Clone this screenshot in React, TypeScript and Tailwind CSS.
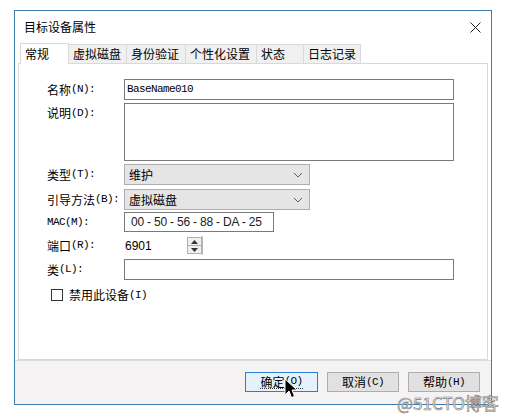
import React from "react";

const CJK = "font-['Microsoft_YaHei','Noto_Sans_CJK_SC',sans-serif]";
const MONO = "font-['Liberation_Mono','Noto_Sans_CJK_SC',monospace]";

type LabelProps = { zh?: string; en: string };

function Label({ zh, en }: LabelProps) {
  return (
    <span className="flex items-center text-black">
      {zh && <span className={`${CJK} text-[12px] leading-none`}>{zh}</span>}
      <span className={`${MONO} text-[11px] leading-none tracking-[-0.6px]`}>{en}</span>
    </span>
  );
}

const TABS = [
  { name: "常规", w: "w-[49px]", active: true },
  { name: "虚拟磁盘", w: "w-[58px]" },
  { name: "身份验证", w: "w-[59px]" },
  { name: "个性化设置", w: "w-[71px]" },
  { name: "状态", w: "w-[47px]" },
  { name: "日志记录", w: "w-[57px]" },
];

function Chevron() {
  return (
    <svg width="10" height="6" viewBox="0 0 10 6" className="text-[#606060]">
      <path d="M1 1 L5 5 L9 1" fill="none" stroke="currentColor" strokeWidth="1" />
    </svg>
  );
}

function Select({ value }: { value: string }) {
  return (
    <div className="flex h-[21px] w-[186px] items-center justify-between border border-[#adadad] bg-[#e5e5e5] pl-[4px] pr-[6px]">
      <span className={`${CJK} text-[12px] leading-none text-black`}>{value}</span>
      <Chevron />
    </div>
  );
}

function Cursor() {
  return (
    <svg width="14" height="21" viewBox="0 0 14 21" className="absolute left-[284px] top-[378px]">
      <path
        d="M1 1 L1 17 L5 13 L7.5 19.5 L10.5 18.3 L8 12 L13 12 Z"
        fill="#000"
        stroke="#fff"
        strokeWidth="1"
        strokeLinejoin="round"
      />
    </svg>
  );
}

export default function App() {
  return (
    <div className="relative h-[418px] w-[505px] overflow-hidden bg-white">
      <div className="ml-[14px] mt-[10px] flex h-[395px] w-[478px] flex-col border border-[#3a7fb0] bg-white">
        {/* title bar */}
        <div className="flex h-[32px] shrink-0 items-center justify-between pl-[9px] pr-[10px]">
          <span className={`${CJK} text-[12px] text-black`}>目标设备属性</span>
          <svg width="11" height="11" viewBox="0 0 11 11">
            <path d="M0.5 0.5 L10.5 10.5 M10.5 0.5 L0.5 10.5" stroke="#222" strokeWidth="1" />
          </svg>
        </div>

        {/* tabs */}
        <div className="flex h-[20px] shrink-0 items-end pl-[5px]">
          {TABS.map((t) =>
            t.active ? (
              <div
                key={t.name}
                className={`${t.w} relative z-10 -mb-px flex h-[21px] items-center border border-b-0 border-[#d9d9d9] bg-white pl-[4px]`}
              >
                <span className={`${CJK} text-[12px] leading-none text-black`}>{t.name}</span>
              </div>
            ) : (
              <div
                key={t.name}
                className={`${t.w} flex h-[19px] items-center border border-l-0 border-b-0 border-[#d9d9d9] bg-[#f0f0f0] pl-[4px]`}
              >
                <span className={`${CJK} text-[12px] leading-none text-black`}>{t.name}</span>
              </div>
            )
          )}
        </div>

        {/* panel */}
        <div className="mx-[3px] flex h-[297px] shrink-0 flex-col border border-[#d9d9d9] bg-white pl-[28px] pt-[15px]">
          <div className="flex h-[21px] items-center">
            <div className="w-[77px]">
              <Label zh="名称" en="(N):" />
            </div>
            <div className="flex h-[21px] w-[330px] items-center border border-[#7a7a7a] pl-[2px]">
              <span className={`${MONO} text-[11px] leading-none tracking-[-0.6px] text-black`}>BaseName010</span>
            </div>
          </div>

          <div className="mt-[3px] flex h-[58px]">
            <div className="w-[77px] pt-[4px]">
              <Label zh="说明" en="(D):" />
            </div>
            <div className="h-[58px] w-[330px] border border-[#7a7a7a]" />
          </div>

          <div className="mt-[3px] flex h-[21px] items-center">
            <div className="w-[77px]">
              <Label zh="类型" en="(T):" />
            </div>
            <Select value="维护" />
          </div>

          <div className="mt-[4px] flex h-[21px] items-center">
            <div className="w-[77px]">
              <Label zh="引导方法" en="(B):" />
            </div>
            <Select value="虚拟磁盘" />
          </div>

          <div className="mt-[2px] flex h-[20px] items-center">
            <div className="w-[77px]">
              <Label en="MAC(M):" />
            </div>
            <div className="flex h-[20px] w-[150px] items-center border border-[#7a7a7a] pl-[6px]">
              <span className="font-['Liberation_Sans',sans-serif] text-[12px] leading-none tracking-[-0.2px] text-[#222]">
                00 - 50 - 56 - 88 - DA - 25
              </span>
            </div>
          </div>

          <div className="mt-[4px] flex h-[19px] items-center">
            <div className="w-[77px]">
              <Label zh="端口" en="(R):" />
            </div>
            <div className="flex h-[19px] w-[79px] items-center justify-between border-r border-[#b9b9b9]">
              <span className="font-['Liberation_Sans',sans-serif] pl-[1px] text-[12px] leading-none text-black">6901</span>
              <div className="flex h-[17px] w-[15px] flex-col border border-[#b0b0b0] bg-[#f0f0f0]">
                <div className="flex flex-1 items-center justify-center border-b border-[#b0b0b0]">
                  <svg width="7" height="4" viewBox="0 0 7 4">
                    <path d="M0 4 L3.5 0 L7 4 Z" fill="#333" />
                  </svg>
                </div>
                <div className="flex flex-1 items-center justify-center">
                  <svg width="7" height="4" viewBox="0 0 7 4">
                    <path d="M0 0 L3.5 4 L7 0 Z" fill="#333" />
                  </svg>
                </div>
              </div>
            </div>
          </div>

          <div className="mt-[4px] flex h-[21px] items-center">
            <div className="w-[77px]">
              <Label zh="类" en="(L):" />
            </div>
            <div className="h-[21px] w-[330px] border border-[#7a7a7a]" />
          </div>

          <div className="ml-[4px] mt-[9px] flex items-center gap-[6px]">
            <div className="h-[12px] w-[12px] border border-[#333]" />
            <Label zh="禁用此设备" en="(I)" />
          </div>
        </div>

        {/* button bar */}
        <div className="flex flex-1 items-start justify-end gap-[9px] border-t border-[#dcdcdc] bg-[#f4f2f2] pr-[11px] pt-[11px]">
          <div className="flex h-[20px] w-[73px] items-center justify-center border border-[#2a7ed2] bg-[#e5f1fb]">
            <span className="border-b border-dotted border-[#333]">
              <Label zh="确定" en="(O)" />
            </span>
          </div>
          <div className="flex h-[20px] w-[72px] items-center justify-center border border-[#adadad] bg-[#e1e1e1]">
            <Label zh="取消" en="(C)" />
          </div>
          <div className="flex h-[20px] w-[72px] items-center justify-center border border-[#adadad] bg-[#e1e1e1]">
            <Label zh="帮助" en="(H)" />
          </div>
        </div>
      </div>

      <Cursor />

      <span
        className={`${CJK} absolute left-[397px] top-[394px] text-[17px] leading-none text-[#ececec] [-webkit-text-stroke:0.6px_#7a7a7a]`}
      >
        @51CTO博客
      </span>
    </div>
  );
}
